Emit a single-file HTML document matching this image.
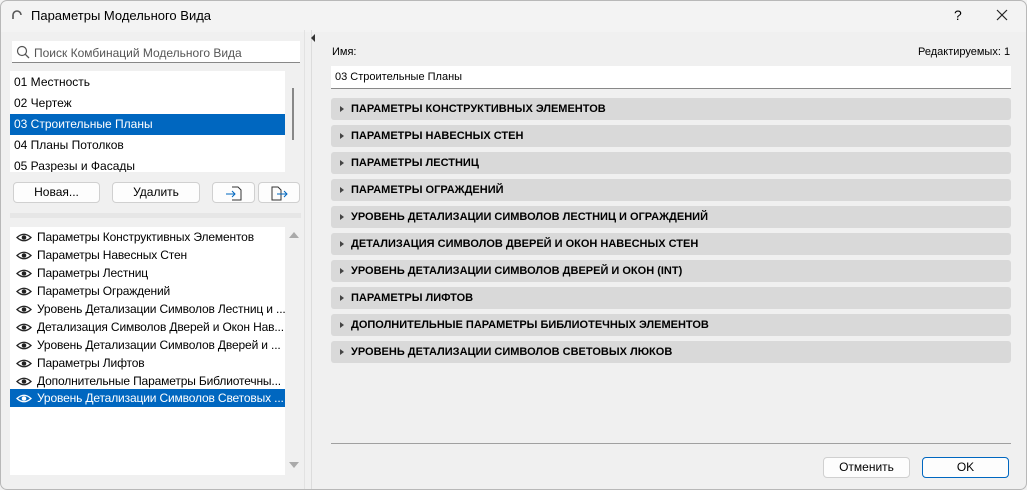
<!DOCTYPE html>
<html><head><meta charset="utf-8"><style>
*{box-sizing:border-box;margin:0;padding:0}
body{width:1027px;height:490px;background:#fff;font-family:"Liberation Sans",sans-serif;font-size:12px;color:#000;position:relative;overflow:hidden}
.win{position:absolute;left:0;top:0;width:1027px;height:490px;background:#f0f0f0;overflow:hidden}
.frame{position:absolute;left:0;top:0;width:1027px;height:490px;border:1px solid #b8b8b8;border-radius:7px}
.title{position:absolute;left:0;top:0;width:100%;height:32px;background:#f3f3f3}
.a{position:absolute;white-space:nowrap}
.box{position:absolute;background:#fff}
.btn{position:absolute;background:#fdfdfd;border:1px solid #d0d0d0;border-radius:4px;text-align:center;line-height:19px;font-size:12px}
.row{position:absolute;left:0;width:275px;height:21px;line-height:21px;padding-left:4px}
.sel{background:#0067c0;color:#fff}
.r2{position:absolute;left:0;width:275px;height:18px;line-height:18px;padding-left:27px;white-space:nowrap;overflow:hidden;letter-spacing:-0.15px}
.eye{position:absolute;left:6px;top:5px}
.sec{position:absolute;left:331px;width:680px;height:22px;background:#d9d9d9;border-radius:3px;font-weight:bold;font-size:11px;line-height:22px;padding-left:20px}
.sec:before{content:"";position:absolute;left:9px;top:8px;border-left:4px solid #444;border-top:3px solid transparent;border-bottom:3px solid transparent}
</style></head><body><div class="win">
<div class="title"></div>
<svg class="a" style="left:11px;top:9px" width="12" height="12" viewBox="0 0 12 12"><path d="M2 10 V6 A4 4 0 0 1 10 6" stroke="#555" stroke-width="1.6" fill="none"/></svg>
<div class="a" style="left:31px;top:8px;font-size:13px">Параметры Модельного Вида</div>
<div class="a" style="left:954px;top:7px;font-size:14px">?</div>
<svg class="a" style="left:996px;top:9px" width="12" height="12"><path d="M1 1L11 11M11 1L1 11" stroke="#222" stroke-width="1.2"/></svg>

<div class="box" style="left:12px;top:41px;width:288px;height:22px;border-bottom:1px solid #888"></div>
<svg class="a" style="left:16px;top:45px" width="14" height="14"><circle cx="6" cy="6" r="4.5" stroke="#555" fill="none" stroke-width="1.2"/><path d="M9.3 9.3L13 13" stroke="#555" stroke-width="1.3"/></svg>
<div class="a" style="left:34px;top:46px;color:#555">Поиск Комбинаций Модельного Вида</div>

<div class="box" style="left:10px;top:71px;width:275px;height:101px;overflow:hidden">
<div class="row" style="top:1px">01 Местность</div>
<div class="row" style="top:22px">02 Чертеж</div>
<div class="row sel" style="top:43px">03 Строительные Планы</div>
<div class="row" style="top:64px">04 Планы Потолков</div>
<div class="row" style="top:85px">05 Разрезы и Фасады</div>
</div>
<div class="a" style="left:292px;top:88px;width:2px;height:52px;background:#888"></div>

<div class="btn" style="left:13px;top:182px;width:87px;height:21px">Новая...</div>
<div class="btn" style="left:112px;top:182px;width:88px;height:21px">Удалить</div>
<div class="btn" style="left:212px;top:182px;width:43px;height:21px"><svg width="20" height="18" style="margin-top:1px"><path d="M8 3H14L17 6V16H8" stroke="#333" fill="none"/><path d="M2 10H11M8 7L11 10L8 13" stroke="#0067c0" fill="none"/></svg></div>
<div class="btn" style="left:258px;top:182px;width:42px;height:21px"><svg width="20" height="18" style="margin-top:1px"><path d="M3 3H9L12 6V16H3Z" stroke="#333" fill="none"/><path d="M8 10H18M15 7L18 10L15 13" stroke="#0067c0" fill="none"/></svg></div>

<div class="a" style="left:10px;top:213px;width:291px;height:5px;background:#e6e6e6"></div>

<div class="box" style="left:10px;top:227px;width:275px;height:248px">
<div class="r2" style="top:1px"><svg class="eye" width="16" height="9"><path d="M1 4.5Q8 -2 15 4.5Q8 11 1 4.5Z" fill="none" stroke="#222" stroke-width="1.3"/><circle cx="8" cy="4.5" r="2.3" fill="#222"/></svg>Параметры Конструктивных Элементов</div>
<div class="r2" style="top:19px"><svg class="eye" width="16" height="9"><path d="M1 4.5Q8 -2 15 4.5Q8 11 1 4.5Z" fill="none" stroke="#222" stroke-width="1.3"/><circle cx="8" cy="4.5" r="2.3" fill="#222"/></svg>Параметры Навесных Стен</div>
<div class="r2" style="top:37px"><svg class="eye" width="16" height="9"><path d="M1 4.5Q8 -2 15 4.5Q8 11 1 4.5Z" fill="none" stroke="#222" stroke-width="1.3"/><circle cx="8" cy="4.5" r="2.3" fill="#222"/></svg>Параметры Лестниц</div>
<div class="r2" style="top:55px"><svg class="eye" width="16" height="9"><path d="M1 4.5Q8 -2 15 4.5Q8 11 1 4.5Z" fill="none" stroke="#222" stroke-width="1.3"/><circle cx="8" cy="4.5" r="2.3" fill="#222"/></svg>Параметры Ограждений</div>
<div class="r2" style="top:73px"><svg class="eye" width="16" height="9"><path d="M1 4.5Q8 -2 15 4.5Q8 11 1 4.5Z" fill="none" stroke="#222" stroke-width="1.3"/><circle cx="8" cy="4.5" r="2.3" fill="#222"/></svg>Уровень Детализации Символов Лестниц и ...</div>
<div class="r2" style="top:91px"><svg class="eye" width="16" height="9"><path d="M1 4.5Q8 -2 15 4.5Q8 11 1 4.5Z" fill="none" stroke="#222" stroke-width="1.3"/><circle cx="8" cy="4.5" r="2.3" fill="#222"/></svg>Детализация Символов Дверей и Окон Нав...</div>
<div class="r2" style="top:109px"><svg class="eye" width="16" height="9"><path d="M1 4.5Q8 -2 15 4.5Q8 11 1 4.5Z" fill="none" stroke="#222" stroke-width="1.3"/><circle cx="8" cy="4.5" r="2.3" fill="#222"/></svg>Уровень Детализации Символов Дверей и ...</div>
<div class="r2" style="top:127px"><svg class="eye" width="16" height="9"><path d="M1 4.5Q8 -2 15 4.5Q8 11 1 4.5Z" fill="none" stroke="#222" stroke-width="1.3"/><circle cx="8" cy="4.5" r="2.3" fill="#222"/></svg>Параметры Лифтов</div>
<div class="r2" style="top:145px"><svg class="eye" width="16" height="9"><path d="M1 4.5Q8 -2 15 4.5Q8 11 1 4.5Z" fill="none" stroke="#222" stroke-width="1.3"/><circle cx="8" cy="4.5" r="2.3" fill="#222"/></svg>Дополнительные Параметры Библиотечны...</div>
<div class="r2 sel" style="top:162px"><svg class="eye" width="16" height="9"><path d="M1 4.5Q8 -2 15 4.5Q8 11 1 4.5Z" fill="none" stroke="#fff" stroke-width="1.3"/><circle cx="8" cy="4.5" r="2.3" fill="#fff"/></svg>Уровень Детализации Символов Световых ...</div>
</div>
<div class="a" style="left:289px;top:232px;border-bottom:6px solid #aaa;border-left:5px solid transparent;border-right:5px solid transparent"></div>
<div class="a" style="left:289px;top:462px;border-top:6px solid #aaa;border-left:5px solid transparent;border-right:5px solid transparent"></div>

<div class="a" style="left:304px;top:30px;width:1px;height:460px;background:#e2e2e2"></div>
<div class="a" style="left:311px;top:30px;width:1px;height:460px;background:#dcdcdc"></div>
<div class="a" style="left:311px;top:34px;border-right:4px solid #333;border-top:4px solid transparent;border-bottom:4px solid transparent"></div>

<div class="a" style="left:332px;top:46px;font-size:11px">Имя:</div>
<div class="a" style="left:918px;top:46px;font-size:11px">Редактируемых: 1</div>
<div class="box" style="left:331px;top:66px;width:680px;height:23px;border-bottom:1px solid #888;padding:5px 0 0 4px;font-size:11px">03 Строительные Планы</div>

<div class="sec" style="top:98px">ПАРАМЕТРЫ КОНСТРУКТИВНЫХ ЭЛЕМЕНТОВ</div>
<div class="sec" style="top:125px">ПАРАМЕТРЫ НАВЕСНЫХ СТЕН</div>
<div class="sec" style="top:152px">ПАРАМЕТРЫ ЛЕСТНИЦ</div>
<div class="sec" style="top:179px">ПАРАМЕТРЫ ОГРАЖДЕНИЙ</div>
<div class="sec" style="top:206px">УРОВЕНЬ ДЕТАЛИЗАЦИИ СИМВОЛОВ ЛЕСТНИЦ И ОГРАЖДЕНИЙ</div>
<div class="sec" style="top:233px">ДЕТАЛИЗАЦИЯ СИМВОЛОВ ДВЕРЕЙ И ОКОН НАВЕСНЫХ СТЕН</div>
<div class="sec" style="top:260px">УРОВЕНЬ ДЕТАЛИЗАЦИИ СИМВОЛОВ ДВЕРЕЙ И ОКОН (INT)</div>
<div class="sec" style="top:287px">ПАРАМЕТРЫ ЛИФТОВ</div>
<div class="sec" style="top:314px">ДОПОЛНИТЕЛЬНЫЕ ПАРАМЕТРЫ БИБЛИОТЕЧНЫХ ЭЛЕМЕНТОВ</div>
<div class="sec" style="top:341px">УРОВЕНЬ ДЕТАЛИЗАЦИИ СИМВОЛОВ СВЕТОВЫХ ЛЮКОВ</div>

<div class="a" style="left:331px;top:443px;width:680px;height:1px;background:#a0a0a0"></div>
<div class="btn" style="left:823px;top:457px;width:87px;height:21px">Отменить</div>
<div class="btn" style="left:922px;top:457px;width:87px;height:21px;border-color:#0067c0">OK</div>
<div class="frame"></div>
</div></body></html>
